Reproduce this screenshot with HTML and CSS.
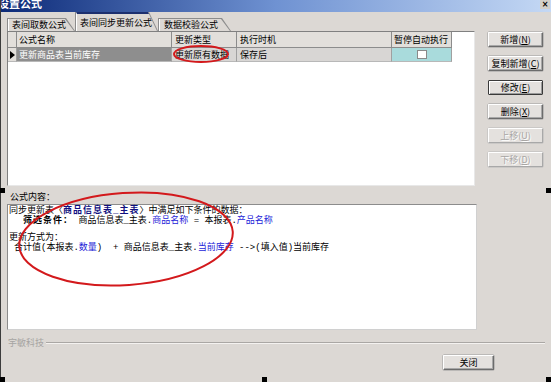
FILE: index.html
```html
<!DOCTYPE html>
<html lang="zh">
<head>
    <meta charset="UTF-8">
    <title>设置公式</title>
    <link rel="stylesheet" href="styles.css">
</head>
<body>
    <div class="window">
        <div class="titlebar">
            <span class="title">设置公式</span>
            <span class="close">×</span>
        </div>

        <div class="content">
            <div class="left">
                <div class="tabs">
                    <div class="tab tab-1"><span>表间取数公式</span></div>
                    <div class="tab tab-2 active"><span>表间同步更新公式</span></div>
                    <div class="tab tab-3"><span>数据校验公式</span></div>
                </div>

                <div class="grid">
                    <div class="row head">
                        <div class="cell ind"></div>
                        <div class="cell">公式名称</div>
                        <div class="cell">更新类型</div>
                        <div class="cell">执行时机</div>
                        <div class="cell">暂停自动执行</div>
                    </div>
                    <div class="row data">
                        <div class="cell ind"><i class="arrow"></i></div>
                        <div class="cell sel">更新商品表当前库存</div>
                        <div class="cell">更新原有数据</div>
                        <div class="cell">保存后</div>
                        <div class="cell check"><i class="box"></i></div>
                    </div>
                </div>

                <div class="label">公式内容：</div>

                <div class="memo">
                    <div class="line">同步更新表〈<b class="navy">商品信息表_主表</b>〉中满足如下条件的数据：</div>
                    <div class="line indent-2"><b>筛选条件：</b> 商品信息表_主表.<span class="blue">商品名称</span> = 本报表.<span class="blue">产品名称</span></div>
                    <div class="blank"></div>
                    <div class="line">更新方式为：</div>
                    <div class="line indent-1">合计值(本报表.<span class="blue">数量</span>)  + 商品信息表_主表.<span class="blue">当前库存</span> -->(填入值)当前库存</div>
                </div>
            </div>

            <div class="side">
                <button class="btn">新增(<u>N</u>)</button>
                <button class="btn">复制新增(<u>C</u>)</button>
                <button class="btn focus">修改(<u>E</u>)</button>
                <button class="btn">删除(<u>X</u>)</button>
                <button class="btn" disabled>上移(<u>U</u>)</button>
                <button class="btn" disabled>下移(<u>D</u>)</button>
            </div>
        </div>

        <div class="legend">
            <span>宇敏科技</span>
            <div class="rule"></div>
        </div>

        <div class="footer">
            <button class="btn close-btn">关闭</button>
        </div>

        <!-- design-time selection handles -->
        <i class="handle h-left"></i>
        <i class="handle h-right"></i>
        <i class="handle h-bl"></i>
        <i class="handle h-bm"></i>
        <i class="handle h-br"></i>

        <!-- red annotation marks drawn over the screenshot -->
        <svg class="marks" width="551" height="382" viewBox="0 0 551 382">
            <ellipse cx="201" cy="54" rx="27" ry="8" fill="none" stroke="#d3191c" stroke-width="2"/>
            <ellipse cx="126" cy="239" rx="107" ry="46" fill="none" stroke="#d3191c" stroke-width="2" transform="rotate(-4 126 239)"/>
        </svg>
    </div>
</body>
</html>
```

FILE: styles.css
```css
html, body {
    margin: 0;
    padding: 0;
}

body {
    width: 551px;
    height: 382px;
    overflow: hidden;
    background: #dcd8d4;
    font-family: "Noto Sans CJK SC", "Liberation Sans", sans-serif;
    font-size: 9px;
    color: #000;
}

.window {
    position: relative;
    width: 551px;
    height: 382px;
    box-sizing: border-box;
    border-left: 1px solid #3c3c3c;
}

/* title bar */
.titlebar {
    height: 12px;
    display: flex;
    justify-content: space-between;
    overflow: hidden;
    background: linear-gradient(to right, #0c2a78, #6f92d2 50%, #c4d8f4);
}

.title {
    margin: -4px 0 0 -3px;
    font-size: 11px;
    font-weight: bold;
    line-height: 14px;
    color: #fff;
}

.close {
    width: 10px;
    height: 9px;
    margin-right: 1px;
    background: #d4d0c8;
    font-family: "DejaVu Sans", sans-serif;
    font-size: 8px;
    font-weight: bold;
    line-height: 9px;
    text-align: center;
}

/* main area */
.content {
    display: flex;
    padding-left: 6px;
}

.left {
    width: 470px;
}

.tabs {
    display: flex;
    align-items: flex-end;
    height: 19px;
}

.tab {
    height: 13px;
    box-sizing: border-box;
    padding: 1px 1px 0 1px;
    background: #8c8c8c;
    clip-path: polygon(0 0, calc(100% - 9px) 0, 100% 100%, 0 100%);
}

.tab span {
    display: block;
    height: 100%;
    padding-left: 3px;
    line-height: 12px;
    background: #dcd8d4;
    border-left: 1px solid #fff;
    clip-path: polygon(0 0, calc(100% - 9px) 0, 100% 100%, 0 100%);
    white-space: nowrap;
}

.tab-1 { width: 68px; }
.tab-2 { width: 83px; }
.tab-3 { width: 73px; }
.tab-3 span { padding-left: 4px; }

.tab.active {
    height: 19px;
    padding-top: 0;
}

.tab.active span {
    box-sizing: border-box;
    border-top: 2px solid #1c2f6e;
    padding-top: 3px;
}

/* grid */
.grid {
    width: 468px;
    height: 155px;
    box-sizing: border-box;
    background: #fff;
    border: 1px solid;
    border-color: #808080 #e8e8e8 #e8e8e8 #808080;
}

.row {
    display: grid;
    grid-template-columns: 9px 155px 65px 155px 60px;
}

.cell {
    box-sizing: border-box;
    padding-left: 2px;
    border-right: 1px solid #a0a0a0;
    white-space: nowrap;
    overflow: hidden;
}

.head .cell {
    height: 16px;
    line-height: 15px;
    background: #e2dfdb;
    border-bottom: 1px solid #8c8c8c;
    border-right-color: #8c8c8c;
}

.head .cell:nth-child(3),
.head .cell:nth-child(4) {
    padding-left: 3px;
}

.data .cell {
    height: 14px;
    line-height: 14px;
    background: #d8d6d4;
    border-bottom: 1px solid #b8b8b8;
}

.data .cell:nth-child(3),
.data .cell:nth-child(4) {
    padding-left: 3px;
}

.data .ind {
    background: #e2dfdb;
    padding: 0;
}

.arrow {
    display: block;
    width: 0;
    height: 0;
    margin: 3px 0 0 2px;
    border-top: 4px solid transparent;
    border-bottom: 4px solid transparent;
    border-left: 5px solid #000;
}

.data .sel {
    background: #8e8e8e;
    color: #fff;
}

.data .check {
    background: #a9dbdc;
    display: flex;
    justify-content: center;
    align-items: center;
    padding: 0;
}

.box {
    width: 10px;
    height: 9px;
    box-sizing: border-box;
    background: #fff;
    border: 1px solid #8a8a8a;
}

/* formula text */
.label {
    height: 18px;
    padding: 5px 0 0 3px;
    box-sizing: border-box;
    line-height: 12px;
}

.memo {
    height: 126px;
    box-sizing: border-box;
    padding: 1px 0 0 1px;
    background: #fff;
    border: 1px solid;
    border-color: #8c8c8c #d0d0d0 #d0d0d0 #8c8c8c;
    /* half-width latin like the old bitmap font */
    font-family: "Liberation Mono", "Noto Sans CJK SC", monospace;
}

.line {
    height: 10px;
    line-height: 10px;
    white-space: pre;
}

.line b {
    letter-spacing: 1px;
}

.blank {
    height: 7px;
}

.indent-1 { padding-left: 5px; }
.indent-2 { padding-left: 14px; }

.navy {
    color: #101080;
}

.blue {
    color: #1d1dd8;
}

/* buttons */
.side {
    display: flex;
    flex-direction: column;
    gap: 9px;
    margin-left: 11px;
    padding-top: 20px;
}

.btn {
    width: 55px;
    height: 15px;
    padding: 0;
    box-sizing: border-box;
    font-family: inherit;
    font-size: 9px;
    line-height: 12px;
    color: #000;
    background: #e4e1de;
    border: 1px solid;
    border-color: #fff #6c6c6c #6c6c6c #fff;
    box-shadow: inset -1px -1px 0 #a8a8a8, 0 0 0 0.5px #9a9a9a;
    border-radius: 1px;
}

.btn.focus {
    border-color: #3a3a3a;
    box-shadow: inset 1px 1px 0 #fff, inset -1px -1px 0 #9a9a9a;
}

.btn:disabled {
    color: #a8a6a4;
    text-shadow: 1px 1px 0 #fff;
    border-color: #fff #a8a8a8 #a8a8a8 #fff;
    box-shadow: 0 0 0 0.5px #b8b8b8;
}

/* footer */
.legend {
    display: flex;
    align-items: center;
    height: 12px;
    margin-top: 6px;
    padding-left: 7px;
    color: #a6a4a2;
}

.rule {
    flex: 1;
    margin: 1px 6px 0 2px;
    border-top: 1px solid #aaa7a4;
    border-bottom: 1px solid #f4f2f0;
}

.footer {
    display: flex;
    justify-content: flex-end;
    padding: 7px 57px 0 0;
}

.close-btn {
    width: 51px;
}

/* overlays */
.handle {
    position: absolute;
    width: 5px;
    height: 5px;
    background: #000;
}

.h-left { left: -1px; top: 188px; }
.h-right { right: 0; top: 188px; }
.h-bl { left: -1px; bottom: 0; }
.h-bm { left: 261px; bottom: 0; }
.h-br { right: 0; bottom: 0; }

.marks {
    position: absolute;
    left: -1px;
    top: 0;
    pointer-events: none;
}
```
